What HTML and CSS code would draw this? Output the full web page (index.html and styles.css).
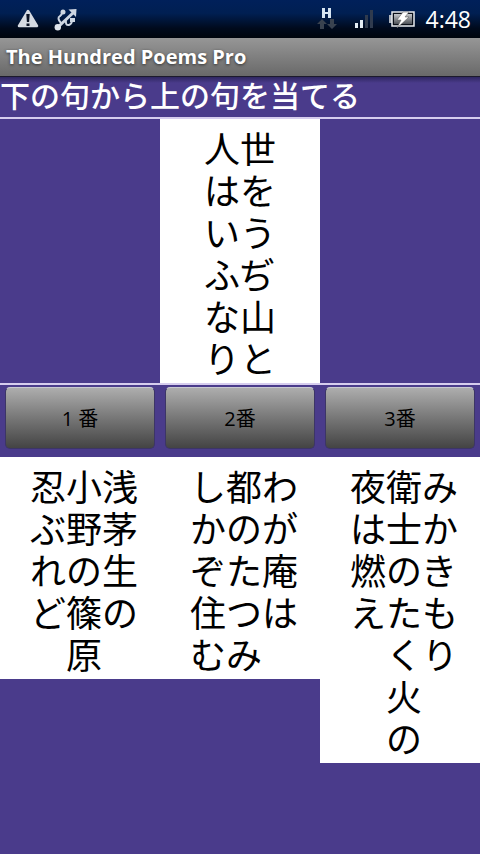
FILE: index.html
```html
<!DOCTYPE html>
<html lang="ja">
<head>
    <meta charset="utf-8">
    <meta name="viewport" content="width=device-width, initial-scale=1">
    <title>The Hundred Poems Pro</title>
    <link rel="stylesheet" href="styles.css">
</head>
<body>
    <div class="status-bar">
        <div class="status-left">
            <svg class="icon-warning" width="22" height="20" viewBox="0 0 22 20" aria-hidden="true">
                <path d="M11 2 L20 17 H2 Z" fill="#d5dae2" stroke="#d5dae2" stroke-width="2.500" stroke-linejoin="round"/>
                <path d="M9.300 5 h3.400 l-.6 8 h-2.200 z M9.500 14.500 h3 v2.500 h-3 z" fill="#0a1224"/>
            </svg>
            <svg class="icon-usb" width="24" height="24" viewBox="0 0 24 24" fill="none" stroke="#cdd6e2" aria-hidden="true">
                <path d="M4 20 L19 6" stroke-width="3"/>
                <path d="M14.500 2.500 L22.500 2 L22 10 Z" fill="#cdd6e2" stroke="none"/>
                <path d="M7 16 Q2.500 11 6 9 Q8 8 8 5 M12 13 Q11 18.500 15 18 Q18 17 18 13" stroke-width="2"/>
                <circle cx="3.800" cy="20.200" r="3.200" fill="#dfe5ec" stroke="none"/>
                <circle cx="9" cy="5" r="2.500" fill="#cdd6e2" stroke="none"/>
                <path d="M16 11 h5 v4 h-5 z" fill="#cdd6e2" stroke="none"/>
            </svg>
        </div>
        <div class="status-right">
            <svg class="icon-data" width="20" height="24" viewBox="0 0 20 24" aria-hidden="true">
                <path d="M5 1 h3 v4 h3 v-4 h3 v10 h-3 v-4 h-3 v4 h-3 z" fill="#d5e4f2"/>
                <path d="M5 12 l5 5 h-3 v5 h-4 v-5 h-3 z M13 12 h4 v5 h3 l-5 5 l-5 -5 h3 z" fill="#39424f"/>
            </svg>
            <svg class="icon-signal" width="18" height="20" viewBox="0 0 18 20" aria-hidden="true">
                <path d="M0 14 h3 v5 h-3 z M5 11 h3 v8 h-3 z" fill="#e4edf5"/>
                <path d="M10 6 h3 v13 h-3 z M15 1 h3 v18 h-3 z" fill="#303b4e"/>
            </svg>
            <svg class="icon-battery" width="28" height="20" viewBox="0 0 28 20" aria-hidden="true">
                <defs>
                    <linearGradient id="charge" x1="0" y1="0" x2="0" y2="1">
                        <stop offset="0" stop-color="#c5c8cc"/>
                        <stop offset="1" stop-color="#4d5157"/>
                    </linearGradient>
                </defs>
                <path d="M1 6 h3 v8 h-3 z" fill="#aeb4bd"/>
                <path d="M4 3 h22 v14 h-22 z" fill="#0a0f18" stroke="#e8ebef" stroke-width="1.500"/>
                <path d="M6 5 h18 v10 h-18 z" fill="url(#charge)"/>
                <path d="M15 3 h6 l-4 5 h4 l-12 11 l4 -8 h-4 z" fill="#fff" stroke="#555" stroke-width=".5"/>
            </svg>
            <span class="clock">4:48</span>
        </div>
    </div>

    <header class="title-bar">The Hundred Poems Pro</header>

    <main>
        <h1 class="mode-title">下の句から上の句を当てる</h1>

        <div class="question">
            <div class="card">
                <p class="verse">人世<br>はを<br>いう<br>ふぢ<br>な山<br>りと</p>
            </div>
        </div>

        <div class="buttons">
            <button class="answer-btn" type="button">1 番</button>
            <button class="answer-btn" type="button">2番</button>
            <button class="answer-btn" type="button">3番</button>
        </div>

        <!-- full-width spaces keep the columns aligned -->
        <div class="answers">
            <div class="card card-answer">
                <p class="verse">忍小浅<br>ぶ野茅<br>れの生<br>ど篠の<br>　原</p>
            </div>
            <div class="card card-answer">
                <p class="verse">し都わ<br>かのが<br>ぞた庵<br>住つは<br>むみ</p>
            </div>
            <div class="card card-answer">
                <p class="verse">夜衛み<br>は士か<br>燃のき<br>えたも<br>　くり<br>　火<br>　の</p>
            </div>
        </div>
    </main>
</body>
</html>
```
FILE: styles.css
```css
body {
    margin: 0;
    min-height: 100vh;
    background-color: #4a3b8b;
    font-family: "Open Sans", "Noto Sans CJK JP", sans-serif;
}

.status-bar {
    display: flex;
    justify-content: space-between;
    align-items: center;
    height: 38px;
    padding: 0 9px 0 17px;
    box-sizing: border-box;
    background: linear-gradient(#00205a, #001f52 35%, #000a1c 75%, #00050c);
}

.status-left {
    display: flex;
    align-items: center;
    gap: 15px;
}

.status-right {
    display: flex;
    align-items: center;
}

.icon-signal {
    margin-left: 18px;
}

.icon-battery {
    margin-left: 15px;
}

.clock {
    margin-left: 10px;
    color: #fff;
    font-size: 23px;
    line-height: 38px;
}

.title-bar {
    padding: 0 6px;
    border-bottom: 1px solid #1c1a2c;
    background: linear-gradient(#969696, #696969);
    color: #fff;
    font-size: 20px;
    font-weight: bold;
    line-height: 38px;
    text-shadow: 0 1px 3px #333;
}

.mode-title {
    margin: 0;
    background: linear-gradient(#2e2660, #4a3b8b 6px);
    color: #fff;
    font-family: "Liberation Sans", "Noto Sans CJK JP", sans-serif;
    font-size: 30px;
    font-weight: 500;
    line-height: 40px;
}

.question {
    display: grid;
    grid-template-columns: 1fr;
    justify-items: center;
    border-top: 2px solid #d6cdee;
    border-bottom: 2px solid #d6cdee;
}

.card {
    display: flex;
    justify-content: center;
    padding: 11px 0 1px;
    background-color: #fff;
    color: #000;
}

.question .card {
    width: 33.333%;
}

.card-answer {
    padding-left: 8px;
}

.verse {
    margin: 0;
    font-family: "Liberation Sans", "Noto Sans CJK JP", sans-serif;
    font-size: 36px;
    line-height: 42px;
    white-space: pre;
}

.buttons,
.answers {
    display: grid;
    grid-template-columns: repeat(3, 1fr);
}

.answers {
    align-items: start;
}

.answer-btn {
    height: 62px;
    margin: 2px 5px 8px;
    padding: 0 0 2px;
    border: 1px solid #3c3566;
    border-top-color: #c8c8d0;
    border-radius: 5px;
    background: linear-gradient(#adadad, #777 50%, #444);
    color: #000;
    font-family: "Open Sans", "Noto Sans CJK JP", sans-serif;
    font-size: 20px;
    cursor: pointer;
}
```
